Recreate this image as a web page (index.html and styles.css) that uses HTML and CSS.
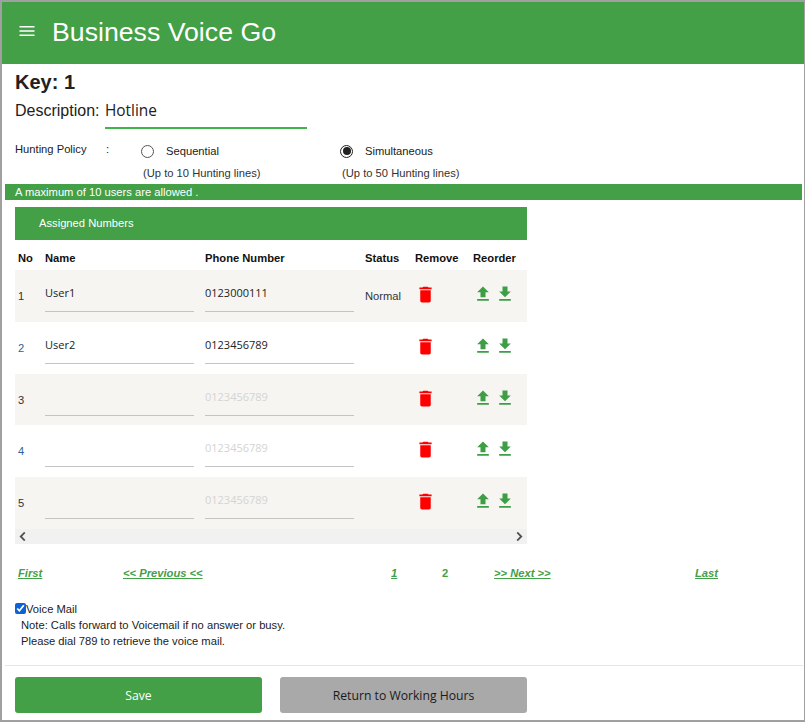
FILE: index.html
```html
<!DOCTYPE html>
<html lang="en">
<head>
<meta charset="utf-8">
<title>Business Voice Go</title>
<link rel="stylesheet" href="styles.css">
</head>
<body>
<div class="frame">
  <header class="topbar">
    <svg class="menu" viewBox="0 0 16 10" aria-hidden="true"><path d="M0.5 0h15v1.6H0.5zM0.5 4.2h15v1.6H0.5zM0.5 8.4h15V10H0.5z"/></svg>
    <h1 class="title">Business Voice Go</h1>
  </header>
  <main class="content">
    <h2 class="key">Key: 1</h2>
    <div class="desc">
      <span class="desc-label">Description:</span>
      <span class="desc-input">Hotline</span>
    </div>
    <div class="policy">
      <div class="policy-label"><span class="policy-name">Hunting Policy</span><span>:</span></div>
      <div class="policy-opt">
        <div class="radio-row"><span class="radio"></span><span>Sequential</span></div>
        <div class="hint">(Up to 10 Hunting lines)</div>
      </div>
      <div class="policy-opt">
        <div class="radio-row"><span class="radio checked"></span><span>Simultaneous</span></div>
        <div class="hint">(Up to 50 Hunting lines)</div>
      </div>
    </div>
    <div class="notice">A maximum of 10 users are allowed .</div>
    <section class="panel">
      <div class="panel-head">Assigned Numbers</div>
      <table class="numbers">
        <colgroup><col class="c-no"><col class="c-name"><col class="c-phone"><col class="c-status"><col class="c-remove"><col class="c-reorder"></colgroup>
        <thead>
          <tr><th>No</th><th>Name</th><th>Phone Number</th><th>Status</th><th>Remove</th><th>Reorder</th></tr>
        </thead>
        <tbody>
          <tr class="odd">
            <td class="no">1</td><td><span class="field">User1</span></td><td><span class="field">0123000111</span></td><td class="status">Normal</td>
            <td class="rm"><svg class="trash" viewBox="0 0 24 24"><path d="M6 19c0 1.1.9 2 2 2h8c1.1 0 2-.9 2-2V7H6v12zM19 4h-3.5l-1-1h-5l-1 1H5v2h14V4z"/></svg></td>
            <td class="ord"><svg class="arrow" viewBox="0 0 24 24"><path d="M9 16h6v-6h4l-7-7-7 7h4v6zm-4 2h14v2H5z"/></svg><svg class="arrow" viewBox="0 0 24 24"><path d="M19 9h-4V3H9v6H5l7 7 7-7zM5 18v2h14v-2H5z"/></svg></td>
          </tr>
          <tr>
            <td class="no link">2</td><td><span class="field">User2</span></td><td><span class="field">0123456789</span></td><td class="status"></td>
            <td class="rm"><svg class="trash" viewBox="0 0 24 24"><path d="M6 19c0 1.1.9 2 2 2h8c1.1 0 2-.9 2-2V7H6v12zM19 4h-3.5l-1-1h-5l-1 1H5v2h14V4z"/></svg></td>
            <td class="ord"><svg class="arrow" viewBox="0 0 24 24"><path d="M9 16h6v-6h4l-7-7-7 7h4v6zm-4 2h14v2H5z"/></svg><svg class="arrow" viewBox="0 0 24 24"><path d="M19 9h-4V3H9v6H5l7 7 7-7zM5 18v2h14v-2H5z"/></svg></td>
          </tr>
          <tr class="odd">
            <td class="no">3</td><td><span class="field"></span></td><td><span class="field ph">0123456789</span></td><td class="status"></td>
            <td class="rm"><svg class="trash" viewBox="0 0 24 24"><path d="M6 19c0 1.1.9 2 2 2h8c1.1 0 2-.9 2-2V7H6v12zM19 4h-3.5l-1-1h-5l-1 1H5v2h14V4z"/></svg></td>
            <td class="ord"><svg class="arrow" viewBox="0 0 24 24"><path d="M9 16h6v-6h4l-7-7-7 7h4v6zm-4 2h14v2H5z"/></svg><svg class="arrow" viewBox="0 0 24 24"><path d="M19 9h-4V3H9v6H5l7 7 7-7zM5 18v2h14v-2H5z"/></svg></td>
          </tr>
          <tr>
            <td class="no link">4</td><td><span class="field"></span></td><td><span class="field ph">0123456789</span></td><td class="status"></td>
            <td class="rm"><svg class="trash" viewBox="0 0 24 24"><path d="M6 19c0 1.1.9 2 2 2h8c1.1 0 2-.9 2-2V7H6v12zM19 4h-3.5l-1-1h-5l-1 1H5v2h14V4z"/></svg></td>
            <td class="ord"><svg class="arrow" viewBox="0 0 24 24"><path d="M9 16h6v-6h4l-7-7-7 7h4v6zm-4 2h14v2H5z"/></svg><svg class="arrow" viewBox="0 0 24 24"><path d="M19 9h-4V3H9v6H5l7 7 7-7zM5 18v2h14v-2H5z"/></svg></td>
          </tr>
          <tr class="odd">
            <td class="no">5</td><td><span class="field"></span></td><td><span class="field ph">0123456789</span></td><td class="status"></td>
            <td class="rm"><svg class="trash" viewBox="0 0 24 24"><path d="M6 19c0 1.1.9 2 2 2h8c1.1 0 2-.9 2-2V7H6v12zM19 4h-3.5l-1-1h-5l-1 1H5v2h14V4z"/></svg></td>
            <td class="ord"><svg class="arrow" viewBox="0 0 24 24"><path d="M9 16h6v-6h4l-7-7-7 7h4v6zm-4 2h14v2H5z"/></svg><svg class="arrow" viewBox="0 0 24 24"><path d="M19 9h-4V3H9v6H5l7 7 7-7zM5 18v2h14v-2H5z"/></svg></td>
          </tr>
        </tbody>
      </table>
      <div class="scrollbar">
        <svg class="chev" viewBox="0 0 8 10"><path d="M6 0.5L1.5 5 6 9.5" /></svg>
        <svg class="chev" viewBox="0 0 8 10"><path d="M2 0.5L6.5 5 2 9.5" /></svg>
      </div>
    </section>
    <nav class="pager">
      <a class="pg" href="#">First</a>
      <a class="pg" href="#">&lt;&lt; Previous &lt;&lt;</a>
      <a class="pg" href="#">1</a>
      <span class="pg-current">2</span>
      <a class="pg" href="#">&gt;&gt; Next &gt;&gt;</a>
      <a class="pg" href="#">Last</a>
    </nav>
    <label class="vm"><input class="vm-check" type="checkbox" checked>Voice Mail</label>
    <p class="note">Note: Calls forward to Voicemail if no answer or busy.</p>
    <p class="note">Please dial 789 to retrieve the voice mail.</p>
  </main>
  <footer class="actions">
    <button class="btn save" type="button">Save</button>
    <button class="btn back" type="button">Return to Working Hours</button>
  </footer>
</div>
</body>
</html>
```

FILE: styles.css
```css
* { box-sizing: border-box; }
html, body { margin: 0; padding: 0; }
body { font-family: "Liberation Sans", Arial, sans-serif; color: #212121; background: #fff; }
.frame { width: 805px; height: 722px; border: solid #a0a0a0; border-width: 2px 1px 2px 2px; display: flex; flex-direction: column; overflow: hidden; }
.topbar { height: 62px; background: #43a047; display: flex; align-items: center; flex: none; }
.menu { width: 16px; height: 10px; fill: #fff; margin: -5px 0 0 17px; }
.title { margin: -2px 0 0 17px; font-size: 26.7px; font-weight: 400; color: #fff; line-height: 34px; }
.content { flex: 1; padding: 0; min-height: 0; }
.key { margin: 6px 0 0 13px; font-size: 20px; line-height: 24px; font-weight: 700; color: #212121; }
.desc { display: flex; margin: 6px 0 0 13px; height: 29px; }
.desc-label { font-size: 16px; line-height: 22px; width: 90px; }
.desc-input { width: 202px; height: 29px; border-bottom: 2px solid #3fb54a; font-family: "Open Sans", sans-serif; font-size: 15.4px; line-height: 22px; color: #212121; }
.policy { display: flex; margin: 13px 0 0 13px; font-size: 11.2px; height: 40px; }
.policy-label { width: 128px; display: flex; line-height: 15px; }
.policy-name { width: 91px; }
.policy-opt { width: 199px; }
.radio-row { display: flex; align-items: center; gap: 12px; height: 16px; margin-top: 1px; }
.radio { width: 13px; height: 13px; border: 1.5px solid #555; border-radius: 50%; margin-left: -2px; }
.radio.checked { border-color: #222; position: relative; }
.radio.checked::after { content: ""; position: absolute; inset: 1.5px; border-radius: 50%; background: #222; }
.hint { margin-top: 7px; line-height: 15px; color: #333; }
.notice { margin: 2px 2px 0 3px; height: 16px; background: #43a047; color: #fff; font-size: 11.2px; line-height: 16px; padding-left: 10px; }
.panel { margin: 7px 0 0 13px; width: 512px; }
.panel-head { height: 33px; background: #43a047; color: #fff; font-size: 11.2px; line-height: 33px; padding-left: 24px; }
.numbers { width: 512px; border-collapse: collapse; table-layout: fixed; font-size: 11.2px; }
.c-no { width: 30px; } .c-name { width: 160px; } .c-phone { width: 160px; } .c-status { width: 50px; } .c-remove { width: 58px; } .c-reorder { width: 54px; }
.numbers th { height: 30px; padding: 6px 0 0; text-align: left; font-weight: 700; color: #111; }
.numbers th:first-child { padding-left: 3px; }
.numbers td { height: 51.8px; padding: 0; vertical-align: top; }
.odd { background: #f6f5f1; }
.no { padding-left: 3px !important; padding-top: 20px !important; color: #333; }
.no.link { color: #2f5f9e; }
.field { display: block; width: 149px; height: 42px; border-bottom: 1px solid #c4c4c4; font-family: "Open Sans", sans-serif; font-size: 11px; line-height: 15px; padding-top: 15px; color: #222; }
.ph { color: #d4d4d4; }
.status { padding-top: 20px !important; color: #333; }
.rm { padding-top: 14px !important; }
.trash { width: 21px; height: 21px; fill: #f00; display: block; margin-left: -0.5px; }
.ord { padding-top: 14px !important; white-space: nowrap; }
.arrow { width: 20px; height: 20px; fill: #3d9e46; margin-right: 2px; }
.scrollbar { height: 15px; background: #f1f1f1; display: flex; justify-content: space-between; align-items: center; padding: 0 4px; }
.chev { width: 8px; height: 9px; fill: none; stroke: #505050; stroke-width: 2; }
.pager { display: grid; grid-template-columns: 105px 268px 51px 52px 201px auto; justify-content: start; margin: 22px 0 0 16px; font-size: 11.2px; line-height: 14px; }
.pg { color: #43a047; font-weight: 700; font-style: italic; text-decoration: underline; justify-self: start; }
.pg-current { color: #43a047; font-weight: 700; }
.vm { display: flex; align-items: center; margin: 21px 0 0 13px; font-size: 11.2px; line-height: 16px; color: #222; }
.vm-check { width: 11px; height: 11px; margin: 0; accent-color: #0f62d6; }
.note { margin: 0 0 0 19px; font-size: 11.2px; line-height: 16px; color: #222; }
.actions { flex: none; height: 55px; margin-left: 3px; margin-right: 1px; border-top: 1px solid #e6e6e6; display: flex; gap: 18px; padding: 11px 0 0 10px; }
.btn { width: 247px; height: 36px; border: 0; border-radius: 3px; font-family: "Open Sans", sans-serif; font-size: 12.2px; padding: 0 0 0; }
.save { background: #43a047; color: #fff; }
.back { background: #a9a9a9; color: #1a1a1a; }
```
